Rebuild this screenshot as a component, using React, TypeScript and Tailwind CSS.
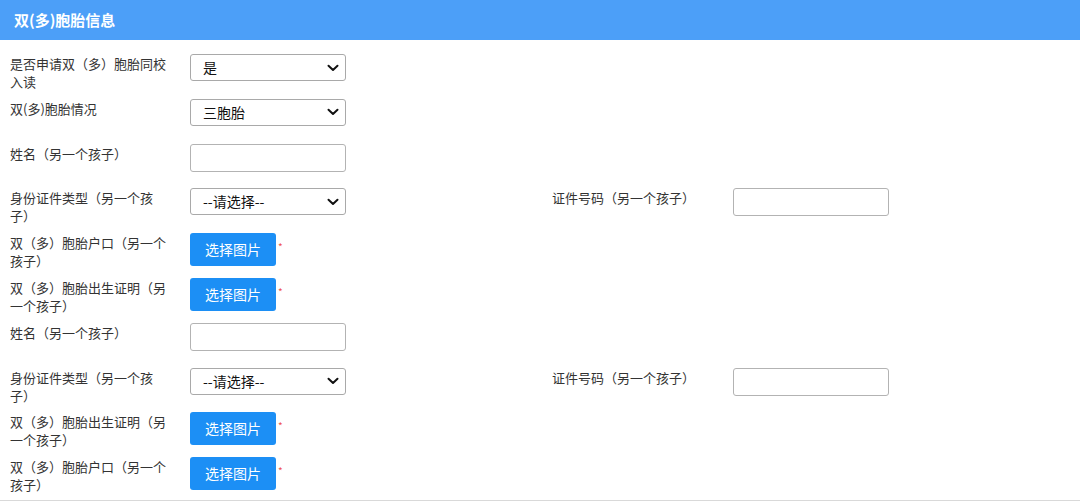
import React from "react";

const font = { fontFamily: '"Microsoft YaHei", "Noto Sans CJK SC", "Noto Sans", sans-serif' };

function Chevron() {
  return (
    <svg width="12" height="8" viewBox="0 0 12 8" className="absolute right-[6px] top-1/2 -translate-y-1/2 pointer-events-none">
      <path d="M1.5 1.8 L6 6 L10.5 1.8" fill="none" stroke="#111" strokeWidth="2" strokeLinecap="round" strokeLinejoin="round" />
    </svg>
  );
}

function Select({ value }: { value: string }) {
  return (
    <div className="relative w-[156px] h-[27px] border border-[#a9a9a9] rounded-[3px] bg-white flex items-center pl-[12px] text-[14px] text-[#111]">
      {value}
      <Chevron />
    </div>
  );
}

function Input() {
  return <div className="w-[156px] h-[28px] border border-[#b3b3b3] rounded-[3px] bg-white" />;
}

function UploadBtn() {
  return (
    <div className="flex items-start">
      <button className="w-[86px] h-[33px] bg-[#1c8ff5] rounded-[3px] text-white text-[14px] leading-[33px]">选择图片</button>
      <span className="text-[#ef5350] text-[10px] leading-none ml-[2px] mt-[9px]">*</span>
    </div>
  );
}

function Label({ children }: { children: React.ReactNode }) {
  return (
    <div className="w-[190px] shrink-0 pl-[10px] pr-[22px] pt-[1px] text-[13px] leading-[18px] text-[#333]">
      {children}
    </div>
  );
}

function Row({ label, control, right }: { label: string; control: React.ReactNode; right?: boolean }) {
  return (
    <div className="h-[44.8px] flex items-start">
      <div className="w-[552px] shrink-0 flex items-start">
        <Label>{label}</Label>
        {control}
      </div>
      {right && (
        <div className="flex items-start">
          <div className="w-[181px] shrink-0 pt-[1px] text-[13px] leading-[18px] text-[#333]">证件号码（另一个孩子）</div>
          <Input />
        </div>
      )}
    </div>
  );
}

export default function App() {
  return (
    <div style={font} className="w-[1080px] h-[501px] bg-white border-b border-[#d9d9d9] overflow-hidden">
      <div className="h-[40px] bg-[#4c9ff8] flex items-center pl-[14px] text-white text-[15px] font-bold">
        双(多)胞胎信息
      </div>
      <div className="pt-[14px]">
        <Row label="是否申请双（多）胞胎同校入读" control={<Select value="是" />} />
        <Row label="双(多)胞胎情况" control={<Select value="三胞胎" />} />
        <Row label="姓名（另一个孩子）" control={<Input />} />
        <Row label="身份证件类型（另一个孩子）" control={<Select value="--请选择--" />} right />
        <Row label="双（多）胞胎户口（另一个孩子）" control={<UploadBtn />} />
        <Row label="双（多）胞胎出生证明（另一个孩子）" control={<UploadBtn />} />
        <Row label="姓名（另一个孩子）" control={<Input />} />
        <Row label="身份证件类型（另一个孩子）" control={<Select value="--请选择--" />} right />
        <Row label="双（多）胞胎出生证明（另一个孩子）" control={<UploadBtn />} />
        <Row label="双（多）胞胎户口（另一个孩子）" control={<UploadBtn />} />
      </div>
    </div>
  );
}
